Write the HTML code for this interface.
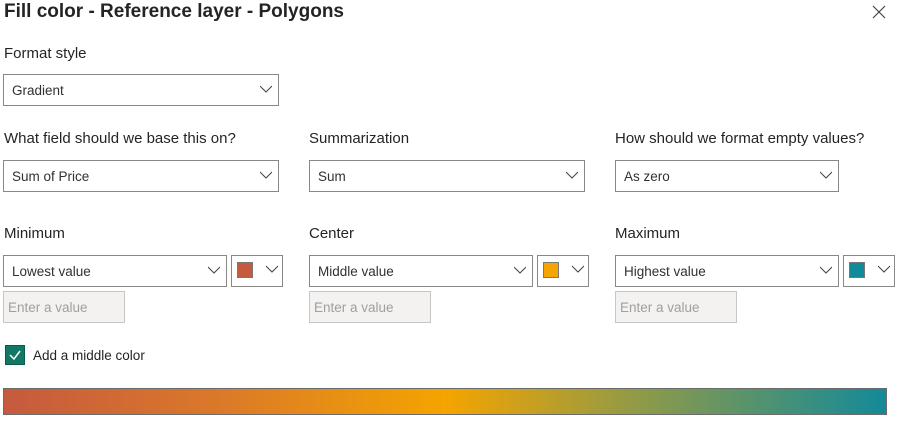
<!DOCTYPE html>
<html><head><style>
*{box-sizing:border-box;margin:0;padding:0}
body{width:899px;height:423px;background:#fff;font-family:"Liberation Sans",sans-serif;color:#252423;position:relative;overflow:hidden}
.a{position:absolute}
.t{font-size:19px;font-weight:bold;left:4px;top:1px;color:#252423}
.l{font-size:15px;color:#252423}
.dd{position:absolute;border:1px solid #8a8886;background:#fff;font-size:13.5px;color:#323130;padding-left:8px;display:flex;align-items:center}
.ch{position:absolute;right:6px;top:50%;margin-top:-5px;width:12px;height:8px}
.sw{position:absolute;border:1px solid #8a8886;background:#fff}
.sw i{position:absolute;left:5px;top:6px;width:16px;height:16px;border:1px solid #777}
.in{position:absolute;border:1px solid #c8c6c4;background:#f3f2f1;color:#a19f9d;font-size:13.5px;padding-left:4px;display:flex;align-items:center;width:122px;height:32px;top:291px}
</style></head><body>
<div class="a t">Fill color - Reference layer - Polygons</div>
<svg class="a" style="left:872px;top:5px" width="14" height="14"><path d="M1 1L13 13M13 1L1 13" stroke="#444" stroke-width="1.2"/></svg>
<div class="a l" style="left:4px;top:45px">Format style</div>
<div class="dd" style="left:3px;top:74px;width:276px;height:32px">Gradient<svg class="ch"><path d="M0 1L6 7L12 1" stroke="#444" fill="none"/></svg></div>

<div class="a l" style="left:4px;top:130px">What field should we base this on?</div>
<div class="a l" style="left:309px;top:130px">Summarization</div>
<div class="a l" style="left:615px;top:130px">How should we format empty values?</div>
<div class="dd" style="left:3px;top:160px;width:276px;height:32px">Sum of Price<svg class="ch"><path d="M0 1L6 7L12 1" stroke="#444" fill="none"/></svg></div>
<div class="dd" style="left:309px;top:160px;width:276px;height:32px">Sum<svg class="ch"><path d="M0 1L6 7L12 1" stroke="#444" fill="none"/></svg></div>
<div class="dd" style="left:615px;top:160px;width:224px;height:32px">As zero<svg class="ch"><path d="M0 1L6 7L12 1" stroke="#444" fill="none"/></svg></div>

<div class="a l" style="left:4px;top:225px">Minimum</div>
<div class="a l" style="left:309px;top:225px">Center</div>
<div class="a l" style="left:615px;top:225px">Maximum</div>
<div class="dd" style="left:3px;top:255px;width:224px;height:32px">Lowest value<svg class="ch"><path d="M0 1L6 7L12 1" stroke="#444" fill="none"/></svg></div>
<div class="sw" style="left:231px;top:255px;width:52px;height:32px"><i style="background:#c55a3f"></i><svg class="a" style="left:34px;top:9px" width="12" height="8"><path d="M0 1L6 7L12 1" stroke="#444" fill="none"/></svg></div>
<div class="dd" style="left:309px;top:255px;width:224px;height:32px">Middle value<svg class="ch"><path d="M0 1L6 7L12 1" stroke="#444" fill="none"/></svg></div>
<div class="sw" style="left:537px;top:255px;width:52px;height:32px"><i style="background:#f5a400"></i><svg class="a" style="left:34px;top:9px" width="12" height="8"><path d="M0 1L6 7L12 1" stroke="#444" fill="none"/></svg></div>
<div class="dd" style="left:615px;top:255px;width:224px;height:32px">Highest value<svg class="ch"><path d="M0 1L6 7L12 1" stroke="#444" fill="none"/></svg></div>
<div class="sw" style="left:843px;top:255px;width:52px;height:32px"><i style="background:#138a99"></i><svg class="a" style="left:34px;top:9px" width="12" height="8"><path d="M0 1L6 7L12 1" stroke="#444" fill="none"/></svg></div>

<div class="in" style="left:3px">Enter a value</div>
<div class="in" style="left:309px">Enter a value</div>
<div class="in" style="left:615px">Enter a value</div>

<div class="a" style="left:5px;top:345px;width:20px;height:20px;background:#117865;border:1px solid #0b5a4c"><svg width="18" height="18"><path d="M4 9L8 13L14 5" stroke="#fff" stroke-width="1.5" fill="none"/></svg></div>
<div class="a" style="left:33px;top:348px;font-size:13.5px;color:#252423">Add a middle color</div>

<div class="a" style="left:3px;top:388px;width:884px;height:27px;border:1px solid #6b6b6b;background:linear-gradient(to right,#c55a3f 0%,#db7a28 25%,#f5a400 50%,#8f9a48 72%,#138a99 100%)"></div>
</body></html>
